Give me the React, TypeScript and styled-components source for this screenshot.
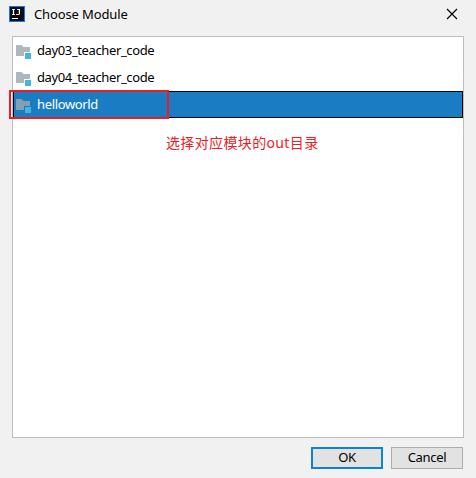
import React from 'react';
import styled, { createGlobalStyle } from 'styled-components';

const GlobalStyle = createGlobalStyle`
  * { box-sizing: border-box; }
  body { margin: 0; background: #f1f1f1; overflow: hidden; }
`;

const Dialog = styled.main`
  width: 476px;
  height: 478px;
  display: flex;
  flex-direction: column;
  background: #f1f1f1;
  color: #000;
  font: 13px/18px "Noto Sans", "Noto Sans CJK SC", sans-serif;
`;

const TitleBar = styled.header`
  height: 36px;
  flex: none;
  display: flex;
  align-items: flex-start;
  padding: 6px 18px 0 9px;
`;

const Title = styled.h1`
  margin: -1px auto 0 9px;
  font-size: 13px;
  line-height: 18px;
  font-weight: 400;
  letter-spacing: -0.12px;
  white-space: nowrap;
`;

const CloseButton = styled.button`
  width: 12px;
  height: 12px;
  margin-top: 2px;
  padding: 0;
  border: 0;
  background: none;
  display: flex;
`;

const ModuleList = styled.section`
  height: 402px;
  flex: none;
  margin: 0 12px;
  border: 1px solid #bdbdbd;
  background: #fff;
`;

const ModuleRow = styled.div<{ $selected?: boolean }>`
  position: relative;
  height: 27px;
  display: flex;
  align-items: flex-start;
  gap: 5px;
  padding: 3px 0 0 2px;
  border: 1px solid ${p => (p.$selected ? '#000' : 'transparent')};
  background: ${p => (p.$selected ? '#1a7dc4' : '#fff')};
  color: ${p => (p.$selected ? '#fff' : '#000')};
`;

const ModuleIcon = styled.svg`
  flex: none;
  margin-top: 2px;
`;

const ModuleName = styled.span<{ $spacing: number }>`
  letter-spacing: ${p => p.$spacing}px;
  white-space: nowrap;
`;

const Highlight = styled.div`
  position: absolute;
  left: -5px;
  top: -2px;
  width: 160px;
  height: 29px;
  border: 2px solid #ed1c24;
`;

const Note = styled.p`
  margin: 15px 0 0 153px;
  color: #ed1c24;
  font-size: 14px;
  line-height: 20px;
  letter-spacing: 0.36px;
  white-space: nowrap;
`;

const Actions = styled.footer`
  display: flex;
  justify-content: flex-end;
  gap: 8px;
  padding: 9px 13px 0 0;
`;

const ActionButton = styled.button<{ $primary?: boolean }>`
  width: 72px;
  height: 22px;
  padding: 0 0 1px;
  border: ${p => (p.$primary ? '2px solid #0a84d8' : '1px solid #adadad')};
  background: #e2e2e2;
  color: #000;
  font: 13px/17px "Noto Sans", sans-serif;
  letter-spacing: -0.3px;
`;

const AppIcon = () => (
  <svg width="16" height="16" viewBox="0 0 16 16">
    <rect width="16" height="16" fill="#087cf0" />
    <rect x="1" y="1" width="14" height="14" fill="#0a0c10" />
    <path
      d="M3 3.5h3M3 8.5h3M8 3.5h3M7 8.5h3"
      fill="none"
      stroke="#d4d6d9"
    />
    <path d="M4.5 3v6M10.4 3v5.4M3 12.5h6" fill="none" stroke="#fff" strokeWidth="1.2" />
  </svg>
);

const FolderIcon = ({ selected = false }: { selected?: boolean }) => (
  <ModuleIcon width="16" height="16" viewBox="0 0 16 16">
    <path d="M0 2h5.5l2 2H14v5H8v4H0z" fill={selected ? '#839fb3' : '#adb7bd'} />
    <rect x="9" y="10" width="6" height="6" fill="#40b6e0" />
  </ModuleIcon>
);

const modules = [
  { name: 'day03_teacher_code', spacing: -0.38 },
  { name: 'day04_teacher_code', spacing: -0.38 },
  { name: 'helloworld', spacing: -0.36, selected: true },
];

export default function App() {
  return (
    <>
      <GlobalStyle />
      <Dialog>
        <TitleBar>
          <AppIcon />
          <Title>Choose Module</Title>
          <CloseButton aria-label="Close">
            <svg width="12" height="12" viewBox="0 0 12 12">
              <path d="M1 1l10 10M11 1L1 11" stroke="#000" strokeWidth="1.15" />
            </svg>
          </CloseButton>
        </TitleBar>
        <ModuleList>
          {modules.map(m => (
            <ModuleRow key={m.name} $selected={m.selected}>
              <FolderIcon selected={m.selected} />
              <ModuleName $spacing={m.spacing}>{m.name}</ModuleName>
              {m.selected && <Highlight />}
            </ModuleRow>
          ))}
          <Note>选择对应模块的out目录</Note>
        </ModuleList>
        <Actions>
          <ActionButton $primary>OK</ActionButton>
          <ActionButton>Cancel</ActionButton>
        </Actions>
      </Dialog>
    </>
  );
}
